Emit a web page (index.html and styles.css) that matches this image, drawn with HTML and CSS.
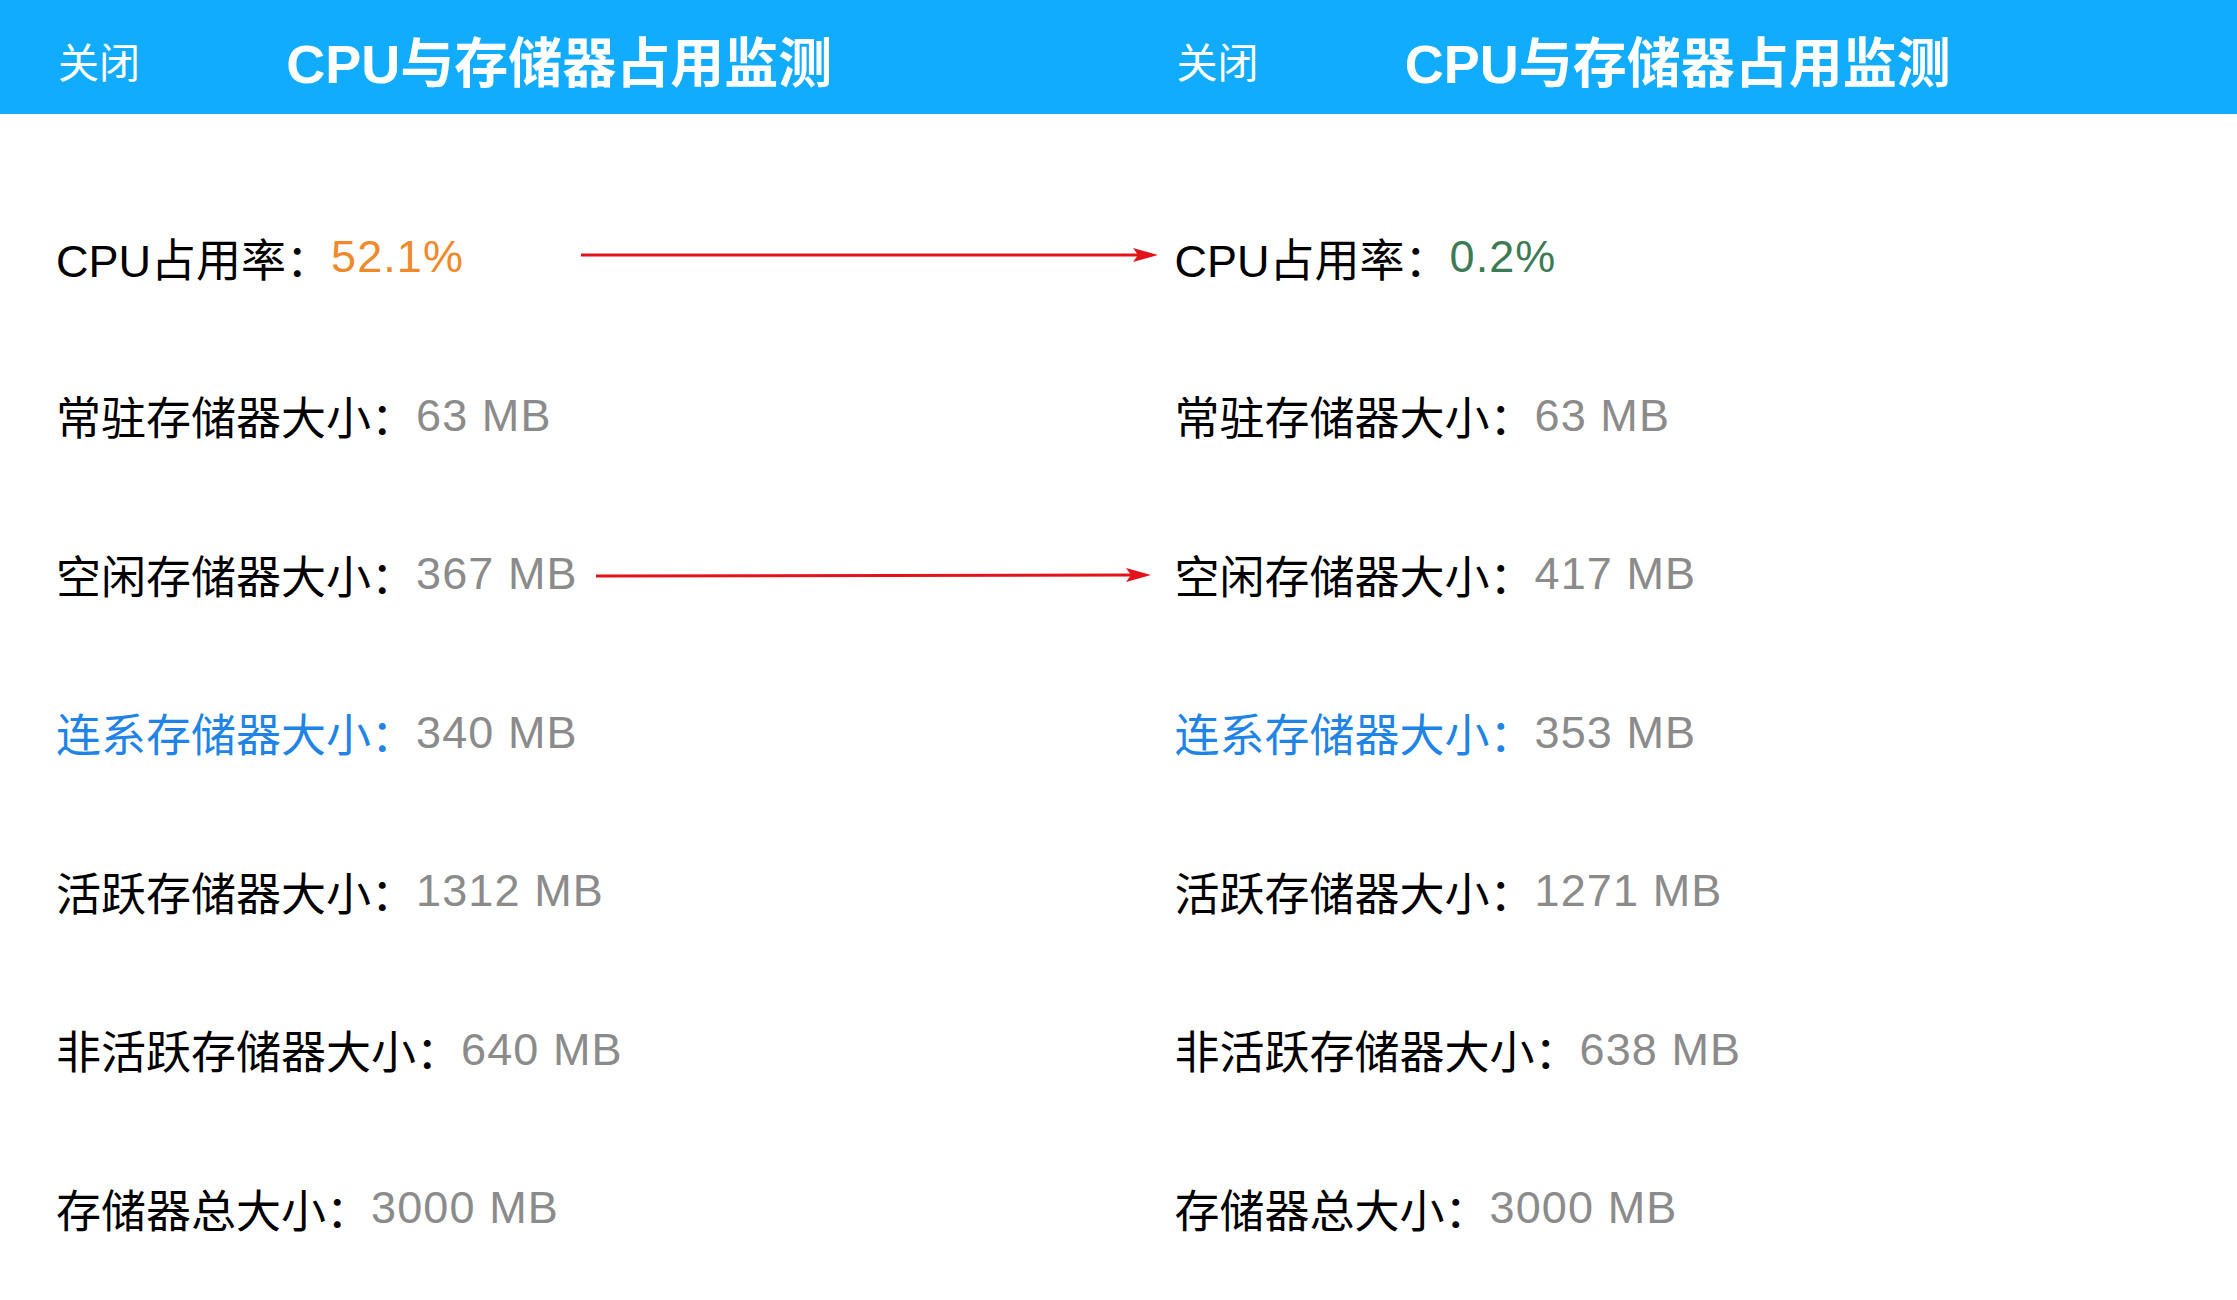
FILE: index.html
```html
<!DOCTYPE html>
<html lang="zh-CN">
<head>
    <meta charset="UTF-8">
    <title>CPU与存储器占用监测</title>
    <link rel="stylesheet" href="styles.css">
</head>
<body>

    <div class="compare">
        <!-- before -->
        <section class="screen">
            <header class="navbar">
                <a href="#" class="close">关闭</a>
                <h1 class="title">CPU与存储器占用监测</h1>
            </header>
            <ul class="stats">
                <li><span class="label">CPU占用率：</span><span class="value busy">52.1%</span></li>
                <li><span class="label">常驻存储器大小：</span><span class="value">63 MB</span></li>
                <li><span class="label">空闲存储器大小：</span><span class="value">367 MB</span></li>
                <li><span class="label link">连系存储器大小：</span><span class="value">340 MB</span></li>
                <li><span class="label">活跃存储器大小：</span><span class="value">1312 MB</span></li>
                <li><span class="label">非活跃存储器大小：</span><span class="value">640 MB</span></li>
                <li><span class="label">存储器总大小：</span><span class="value">3000 MB</span></li>
            </ul>
        </section>

        <!-- after -->
        <section class="screen">
            <header class="navbar">
                <a href="#" class="close">关闭</a>
                <h1 class="title">CPU与存储器占用监测</h1>
            </header>
            <ul class="stats">
                <li><span class="label">CPU占用率：</span><span class="value idle">0.2%</span></li>
                <li><span class="label">常驻存储器大小：</span><span class="value">63 MB</span></li>
                <li><span class="label">空闲存储器大小：</span><span class="value">417 MB</span></li>
                <li><span class="label link">连系存储器大小：</span><span class="value">353 MB</span></li>
                <li><span class="label">活跃存储器大小：</span><span class="value">1271 MB</span></li>
                <li><span class="label">非活跃存储器大小：</span><span class="value">638 MB</span></li>
                <li><span class="label">存储器总大小：</span><span class="value">3000 MB</span></li>
            </ul>
        </section>

        <!-- annotation arrows drawn over both screens -->
        <svg class="arrows" width="2237" height="1300" viewBox="0 0 2237 1300">
            <line x1="581" y1="255" x2="1140" y2="255" />
            <polygon points="1158,255 1133,248 1138,255 1133,262" />
            <line x1="596" y1="576" x2="1133" y2="575" />
            <polygon points="1151,575 1126,568 1131,575 1126,582" />
        </svg>
    </div>

</body>
</html>
```

FILE: styles.css
```css
html, body {
    margin: 0;
    padding: 0;
    background-color: #fff;
}

body {
    font-family: "Liberation Sans", "Noto Sans CJK SC", sans-serif;
    width: 2237px;
    height: 1300px;
    overflow: hidden;
}

.compare {
    display: flex;
    position: relative;
    height: 100%;
}

.screen {
    flex: 1;
    min-width: 0;
}

/* Nav bar */
.navbar {
    height: 100px;
    padding-top: 14px;
    background-color: #12acfe;
    display: flex;
    align-items: center;
    position: relative;
    padding-left: 58px;
}

.close {
    color: #fff;
    text-decoration: none;
    font-size: 41px;
    line-height: 1;
}

.title {
    position: absolute;
    left: 0;
    right: 0;
    margin: 0;
    text-align: center;
    color: #fff;
    font-size: 54px;
    font-weight: bold;
    line-height: 1;
    pointer-events: none;
}

/* Stats list */
.stats {
    list-style: none;
    margin: 0;
    padding: 64px 0 0 56px;
}

.stats li {
    height: 158.5px;
    display: flex;
    align-items: center;
    font-size: 45px;
    white-space: nowrap;
}

.label {
    color: #000;
}

.label.link {
    color: #1f84e6;
}

.value {
    color: #8b8b8b;
    letter-spacing: 1.1px;
}

.value.busy {
    color: #ee8a2b;
}

.value.idle {
    color: #3c7b56;
}

/* Arrows */
.arrows {
    position: absolute;
    top: 0;
    left: 0;
    pointer-events: none;
}

.arrows line {
    stroke: #e3121b;
    stroke-width: 3;
}

.arrows polygon {
    fill: #e3121b;
}
```
